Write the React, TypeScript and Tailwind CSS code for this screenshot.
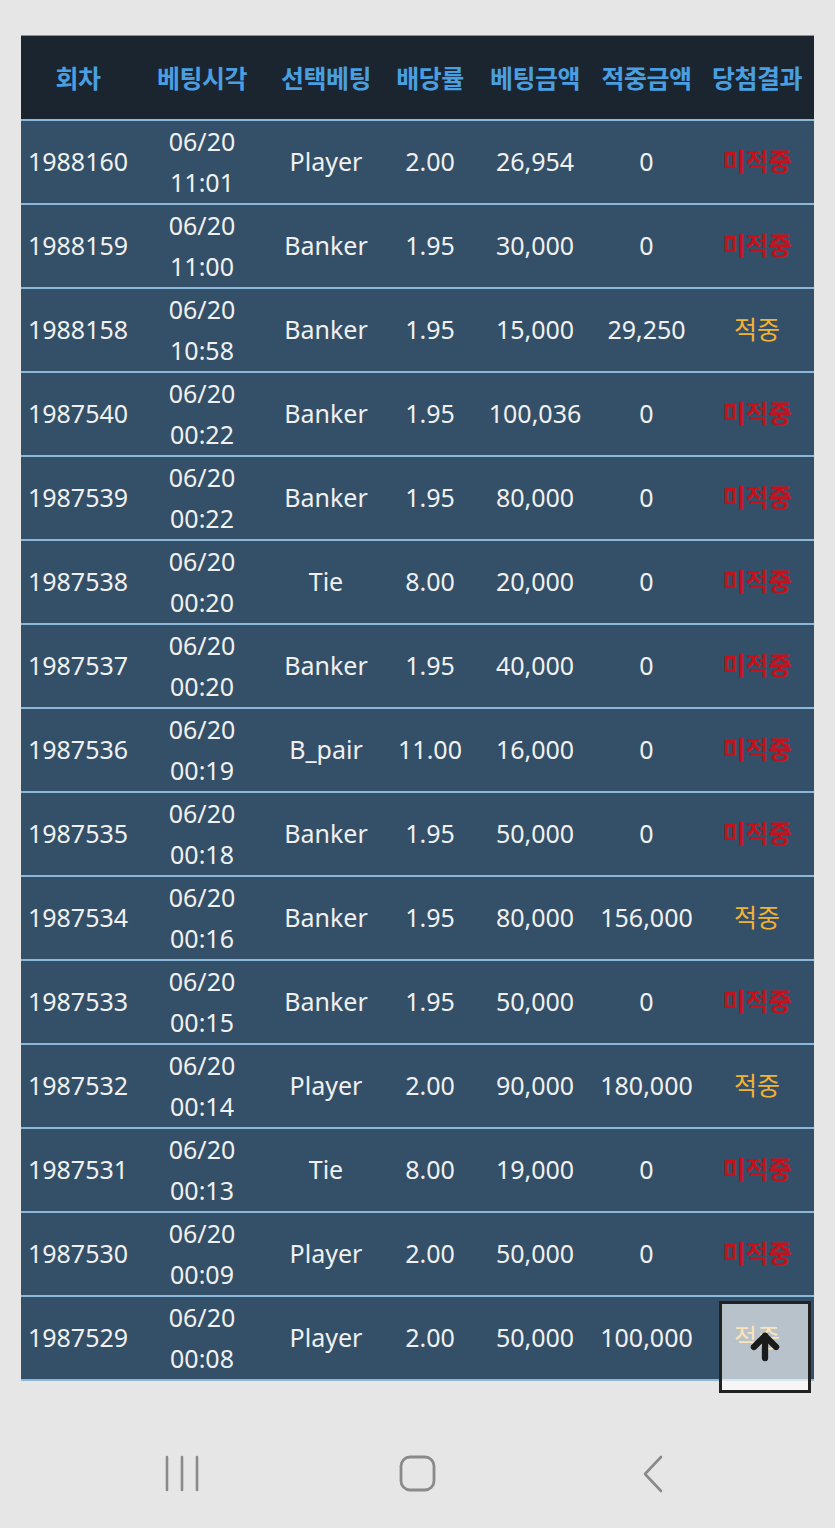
import { ArrowUp } from 'lucide-react'

interface Bet {
  round: string
  date: string
  time: string
  pick: string
  odds: string
  amount: string
  win: string
  hit: boolean
}

const bets: Bet[] = [
  { round: '1988160', date: '06/20', time: '11:01', pick: 'Player', odds: '2.00', amount: '26,954', win: '0', hit: false },
  { round: '1988159', date: '06/20', time: '11:00', pick: 'Banker', odds: '1.95', amount: '30,000', win: '0', hit: false },
  { round: '1988158', date: '06/20', time: '10:58', pick: 'Banker', odds: '1.95', amount: '15,000', win: '29,250', hit: true },
  { round: '1987540', date: '06/20', time: '00:22', pick: 'Banker', odds: '1.95', amount: '100,036', win: '0', hit: false },
  { round: '1987539', date: '06/20', time: '00:22', pick: 'Banker', odds: '1.95', amount: '80,000', win: '0', hit: false },
  { round: '1987538', date: '06/20', time: '00:20', pick: 'Tie', odds: '8.00', amount: '20,000', win: '0', hit: false },
  { round: '1987537', date: '06/20', time: '00:20', pick: 'Banker', odds: '1.95', amount: '40,000', win: '0', hit: false },
  { round: '1987536', date: '06/20', time: '00:19', pick: 'B_pair', odds: '11.00', amount: '16,000', win: '0', hit: false },
  { round: '1987535', date: '06/20', time: '00:18', pick: 'Banker', odds: '1.95', amount: '50,000', win: '0', hit: false },
  { round: '1987534', date: '06/20', time: '00:16', pick: 'Banker', odds: '1.95', amount: '80,000', win: '156,000', hit: true },
  { round: '1987533', date: '06/20', time: '00:15', pick: 'Banker', odds: '1.95', amount: '50,000', win: '0', hit: false },
  { round: '1987532', date: '06/20', time: '00:14', pick: 'Player', odds: '2.00', amount: '90,000', win: '180,000', hit: true },
  { round: '1987531', date: '06/20', time: '00:13', pick: 'Tie', odds: '8.00', amount: '19,000', win: '0', hit: false },
  { round: '1987530', date: '06/20', time: '00:09', pick: 'Player', odds: '2.00', amount: '50,000', win: '0', hit: false },
  { round: '1987529', date: '06/20', time: '00:08', pick: 'Player', odds: '2.00', amount: '50,000', win: '100,000', hit: true },
]

const headers = ['회차', '베팅시각', '선택베팅', '배당률', '베팅금액', '적중금액', '당첨결과']
const widths = ['w-[114px]', 'w-[134px]', 'w-[114px]', 'w-[94px]', 'w-[116px]', 'w-[107px]', 'w-[114px]']

export default function App() {
  return (
    <div className="relative min-h-[1528px] flex flex-col bg-[#e6e6e6] font-['Noto_Sans','Noto_Sans_CJK_KR',sans-serif]">
      <div className="pt-[35px] px-[21px] flex-1">
        <table className="w-[793px] border-collapse table-fixed">
          <colgroup>
            {widths.map((w, i) => (
              <col key={i} className={w} />
            ))}
          </colgroup>
          <thead>
            <tr className="bg-[#1b252f] border-t border-[#8a9199] border-b-2 border-b-[#8cb9da]">
              {headers.map((h) => (
                <th
                  key={h}
                  className="h-[84px] p-0 text-center text-[25px] font-bold text-[#4a9fe0] tracking-[-0.5px] font-['Noto_Sans_CJK_KR',sans-serif]"
                >
                  {h}
                </th>
              ))}
            </tr>
          </thead>
          <tbody>
            {bets.map((b) => (
              <tr key={b.round} className="bg-[#345068] border-b-2 border-[#8cb9da] text-[#f0f0f0] text-[25px]">
                <td className="h-[84px] p-0 text-center">{b.round}</td>
                <td className="p-0 text-center leading-[41px]">
                  <div>{b.date}</div>
                  <div>{b.time}</div>
                </td>
                <td className="p-0 text-center">{b.pick}</td>
                <td className="p-0 text-center">{b.odds}</td>
                <td className="p-0 text-center">{b.amount}</td>
                <td className="p-0 text-center">{b.win}</td>
                <td
                  className={
                    b.hit
                      ? 'p-0 text-center text-[25px] text-[#f2b233]'
                      : 'p-0 text-center text-[25px] font-bold text-[#c4121c]'
                  }
                >
                  {b.hit ? '적중' : '미적중'}
                </td>
              </tr>
            ))}
          </tbody>
        </table>
      </div>

      {/* scroll-to-top button */}
      <button className="absolute left-[719px] top-[1301px] w-[92px] h-[92px] border-[3px] border-[#222] bg-white/65 flex items-center justify-center">
        <ArrowUp size={38} strokeWidth={4} className="text-[#1a1a1a]" />
      </button>

      {/* nav bar */}
      <div className="h-[108px] flex items-center justify-center">
        <div className="w-[235px] flex justify-center">
          <svg width="40" height="40" viewBox="0 0 40 40" className="text-[#8a8a8a]">
            <g stroke="currentColor" strokeWidth="2.6" strokeLinecap="round">
              <line x1="4" y1="3" x2="4" y2="36" />
              <line x1="19" y1="3" x2="19" y2="36" />
              <line x1="34" y1="3" x2="34" y2="36" />
            </g>
          </svg>
        </div>
        <div className="w-[235px] flex justify-center">
          <svg width="40" height="40" viewBox="0 0 40 40" className="text-[#8a8a8a]">
            <rect x="3" y="3" width="33" height="33" rx="9" fill="none" stroke="currentColor" strokeWidth="2.8" />
          </svg>
        </div>
        <div className="w-[235px] flex justify-center">
          <svg width="40" height="40" viewBox="0 0 40 40" className="text-[#8a8a8a]">
            <polyline points="28,3 12,20 28,37" fill="none" stroke="currentColor" strokeWidth="2.6" strokeLinecap="round" strokeLinejoin="round" />
          </svg>
        </div>
      </div>
    </div>
  )
}
